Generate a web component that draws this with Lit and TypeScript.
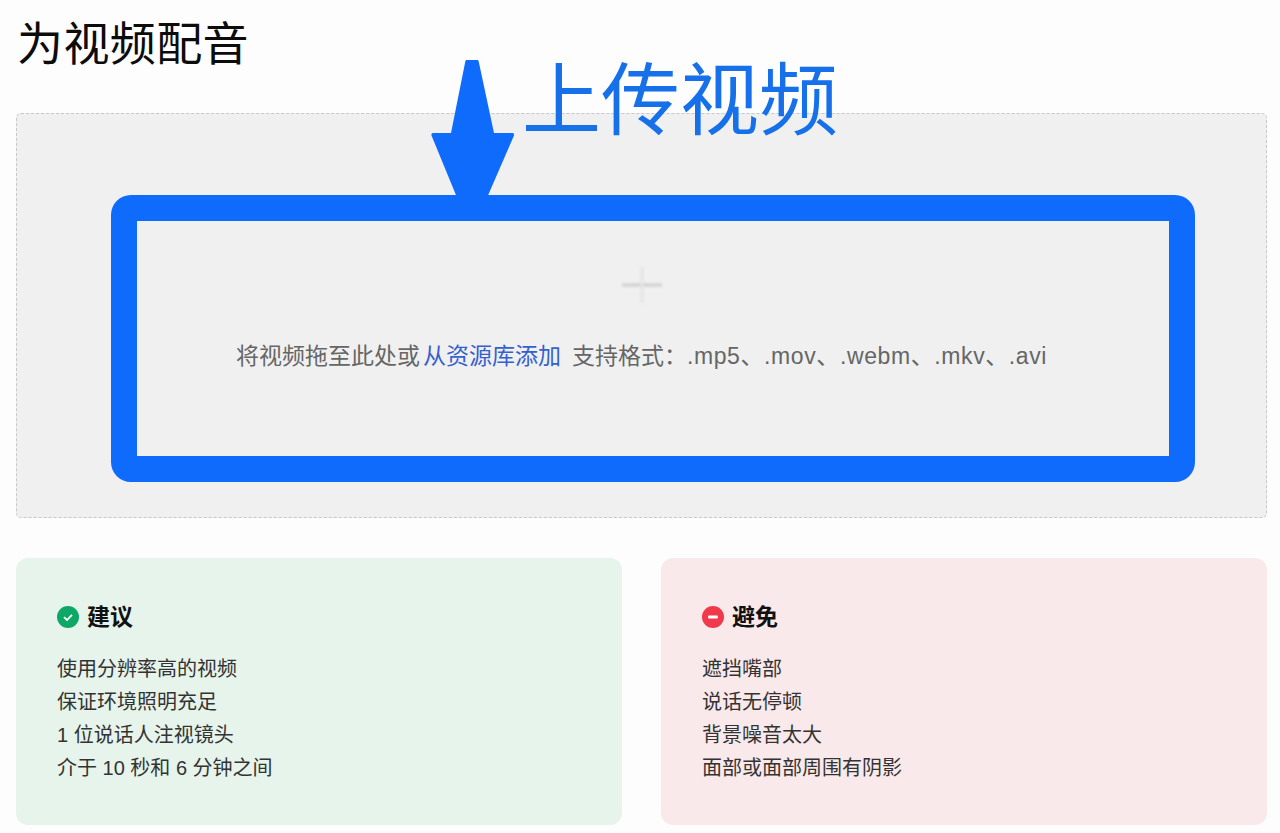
import { css, html, LitElement } from 'lit';
import { customElement } from 'lit/decorators.js';

const GOOD = ['使用分辨率高的视频', '保证环境照明充足', '1 位说话人注视镜头', '介于 10 秒和 6 分钟之间'];
const BAD = ['遮挡嘴部', '说话无停顿', '背景噪音太大', '面部或面部周围有阴影'];

@customElement('app-root')
export class AppRoot extends LitElement {
  static override styles = css`
    :host {
      display: block;
      height: 833px;
      overflow: hidden;
      background: #fdfdfd;
      font-family: 'Liberation Sans', 'Noto Sans CJK SC', sans-serif;
      color: #333;
    }

    .page {
      position: relative;
      padding: 0 13px 0 16px;
    }

    h1 {
      margin: 0;
      padding: 14px 0 0 1px;
      height: 113px;
      box-sizing: border-box;
      font-size: 46px;
      line-height: 60px;
      font-weight: 400;
      letter-spacing: 0.4px;
      color: #0c0c0c;
    }

    .zone {
      box-sizing: border-box;
      height: 405px;
      padding-top: 153px;
      display: flex;
      flex-direction: column;
      align-items: center;
      background: #f0f0f1;
      border: 1px dashed #c8c8c8;
      border-radius: 5px;
    }

    .plus {
      display: block;
      filter: blur(0.8px);
    }

    .hint {
      margin-top: 36px;
      font-size: 23px;
      line-height: 34px;
      color: #666;
      white-space: nowrap;
    }

    .hint a {
      color: #3560cf;
      margin: 0 11px 0 3px;
    }

    .formats {
      letter-spacing: 0.6px;
    }

    .cards {
      display: grid;
      grid-template-columns: 606px 606px;
      gap: 39px;
      margin-top: 40px;
    }

    .card {
      box-sizing: border-box;
      height: 267px;
      padding: 42px 41px 0;
      border-radius: 12px;
    }

    .card.good {
      background: #e6f4ec;
    }

    .card.bad {
      background: #f9e9ea;
    }

    .card h2 {
      margin: 0 0 19px;
      display: flex;
      align-items: center;
      gap: 8px;
      font-size: 23px;
      line-height: 34px;
      font-weight: 700;
      color: #111;
    }

    ul {
      margin: 0;
      padding: 0;
      list-style: none;
      font-size: 20px;
      line-height: 33px;
    }

    .frame {
      position: absolute;
      left: 111px;
      top: 195px;
      width: 1084px;
      height: 287px;
      box-sizing: border-box;
      border: 26px solid #0f6bfb;
      border-radius: 20px;
    }

    .arrow {
      position: absolute;
      left: 431px;
      top: 58px;
    }

    .label {
      position: absolute;
      left: 522px;
      top: 47px;
      font-size: 79px;
      line-height: 110px;
      font-weight: 400;
      color: #1570ea;
      white-space: nowrap;
    }
  `;

  protected override render() {
    return html`<div class="page">
      <h1>为视频配音</h1>
      <div class="zone">
        <svg class="plus" width="42" height="36" viewBox="0 0 42 36">
          <path d="M1 18h40" stroke="#d6d6d6" stroke-width="4" fill="none" />
          <path d="M21 0v36" stroke="#e4e4e4" stroke-width="3" fill="none" />
        </svg>
        <div class="hint">
          将视频拖至此处或<a>从资源库添加</a>支持格式：<span class="formats">.mp5、.mov、.webm、.mkv、.avi</span>
        </div>
      </div>
      <div class="cards">
        <section class="card good">
          <h2>
            <svg width="22" height="22" viewBox="0 0 22 22">
              <circle cx="11" cy="11" r="11" fill="#0da866" />
              <path d="M7 11.2l3 2.800 5-5.200" stroke="#fff" stroke-width="1.800" fill="none" />
            </svg>
            建议
          </h2>
          <ul>
            ${GOOD.map((t) => html`<li>${t}</li>`)}
          </ul>
        </section>
        <section class="card bad">
          <h2>
            <svg width="22" height="22" viewBox="0 0 22 22">
              <circle cx="11" cy="11" r="11" fill="#f03a4b" />
              <rect x="6" y="9.600" width="10" height="2.800" rx="1" fill="#fff" />
            </svg>
            避免
          </h2>
          <ul>
            ${BAD.map((t) => html`<li>${t}</li>`)}
          </ul>
        </section>
      </div>
      <div class="frame"></div>
      <svg class="arrow" width="84" height="146" viewBox="0 0 84 146">
        <path
          d="M36 2h10c1 0 1.500 .5 1.700 1.500L63 75h18c1.500 0 2.500 1 2 2.500L55 142H27L.5 77.500C0 76 1 75 2.500 75H20L34.300 3.500C34.500 2.500 35 2 36 2z"
          fill="#0f6bfb"
        />
      </svg>
      <div class="label">上传视频</div>
    </div>`;
  }
}
